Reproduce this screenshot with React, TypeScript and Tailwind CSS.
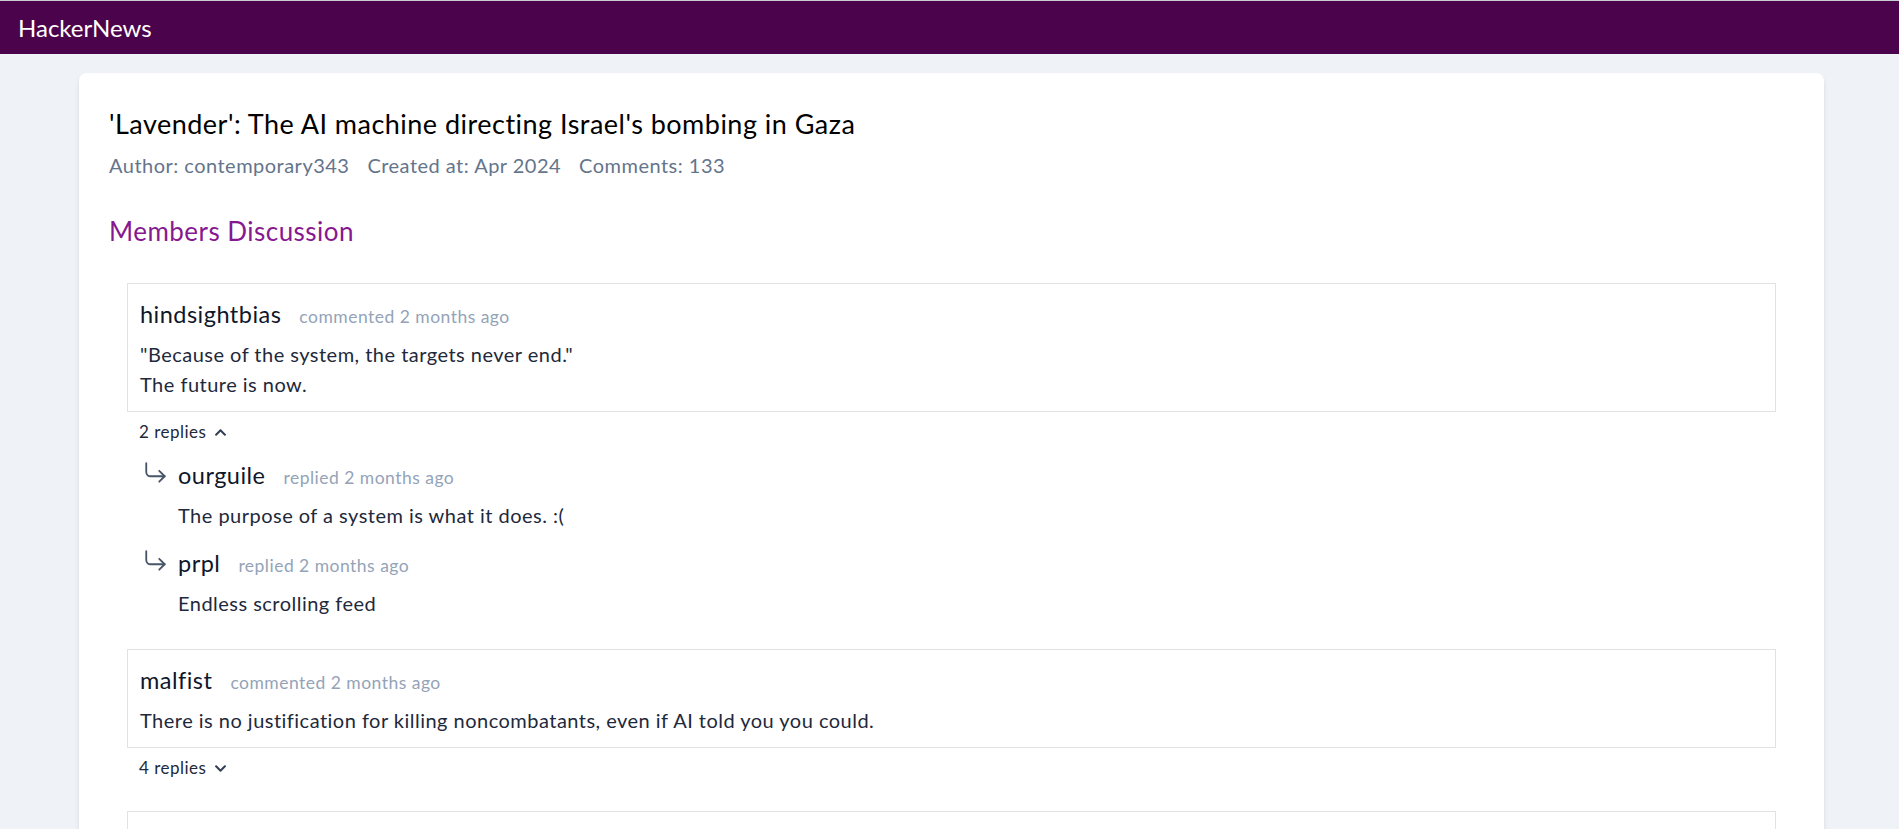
import { FaChevronUp, FaChevronDown } from "react-icons/fa";

type Reply = { user: string; time: string; body: string };

type Comment = {
  user: string;
  time: string;
  body: string[];
  replyCount: number;
  open: boolean;
  replies: Reply[];
};

const comments: Comment[] = [
  {
    user: "hindsightbias",
    time: "commented 2 months ago",
    body: ['"Because of the system, the targets never end."', "The future is now."],
    replyCount: 2,
    open: true,
    replies: [
      { user: "ourguile", time: "replied 2 months ago", body: "The purpose of a system is what it does. :(" },
      { user: "prpl", time: "replied 2 months ago", body: "Endless scrolling feed" },
    ],
  },
  {
    user: "malfist",
    time: "commented 2 months ago",
    body: ["There is no justification for killing noncombatants, even if AI told you you could."],
    replyCount: 4,
    open: false,
    replies: [],
  },
  {
    user: "ChrisArchitect",
    time: "commented 2 months ago",
    body: ["Related discussion from earlier."],
    replyCount: 1,
    open: false,
    replies: [],
  },
];

function ReplyArrow() {
  return (
    <svg width="26" height="26" viewBox="0 0 24 24" fill="none" stroke="#475569" strokeWidth="1.7" strokeLinecap="round" strokeLinejoin="round">
      <polyline points="15 10 20 15 15 20" />
      <path d="M3 3v8a4 4 0 0 0 4 4h13" />
    </svg>
  );
}

function CommentItem({ c }: { c: Comment }) {
  return (
    <div className="mx-[18px]">
      <div className="border border-[#e2e2e2] px-3 pt-4 pb-3">
        <div className="flex items-baseline gap-[18px]">
          <span className="text-[23.5px] leading-[28px] text-[#0f172a]">{c.user}</span>
          <span className="text-[17.5px] leading-[28px] text-[#94a3b8]">{c.time}</span>
        </div>
        <div className="mt-[8px] text-[20px] leading-[30px] text-[#1e293b]">
          {c.body.map((line) => (
            <div key={line}>{line}</div>
          ))}
        </div>
      </div>
      <div className="mt-2 flex items-center gap-2 pl-3 text-[17px] leading-[24px] text-[#1e293b]">
        <span>{c.replyCount} replies</span>
        {c.open ? <FaChevronUp className="text-[13px] text-[#334155]" /> : <FaChevronDown className="text-[13px] text-[#334155]" />}
      </div>
      {c.open && (
        <div className="mt-[17px] flex flex-col gap-[19px] pl-4">
          {c.replies.map((r) => (
            <div key={r.user} className="flex gap-[9px]">
              <div className="-mt-[1px]">
                <ReplyArrow />
              </div>
              <div>
                <div className="flex items-baseline gap-[18px]">
                  <span className="text-[23.5px] leading-[28px] text-[#0f172a]">{r.user}</span>
                  <span className="text-[17.5px] leading-[28px] text-[#94a3b8]">{r.time}</span>
                </div>
                <div className="mt-[8px] text-[20px] leading-[30px] text-[#1e293b]">{r.body}</div>
              </div>
            </div>
          ))}
        </div>
      )}
    </div>
  );
}

export default function App() {
  return (
    <div className="min-h-screen bg-[#eff3f8] font-['Lato',sans-serif] tracking-[0.03em]">
      <header className="flex h-[54px] items-center border-t border-[#c9ccd1] bg-[#4b044b] px-[18px]">
        <span className="text-[24px] tracking-normal text-white">HackerNews</span>
      </header>
      <main className="mt-[19px] ml-[79px] w-[1745px] rounded-lg bg-white px-[30px] pt-[35px] pb-10 shadow-md">
        <h1 className="text-[27px] leading-[32px] text-black">
          'Lavender': The AI machine directing Israel's bombing in Gaza
        </h1>
        <div className="mt-[11px] flex gap-[18px] text-[20px] leading-[28px] text-[#64748b]">
          <span>Author: contemporary343</span>
          <span>Created at: Apr 2024</span>
          <span>Comments: 133</span>
        </div>
        <h2 className="mt-9 text-[26px] leading-[32px] text-[#86198f]">Members Discussion</h2>
        <div className="mt-9 flex flex-col gap-[31px]">
          {comments.map((c) => (
            <CommentItem key={c.user} c={c} />
          ))}
        </div>
      </main>
    </div>
  );
}
